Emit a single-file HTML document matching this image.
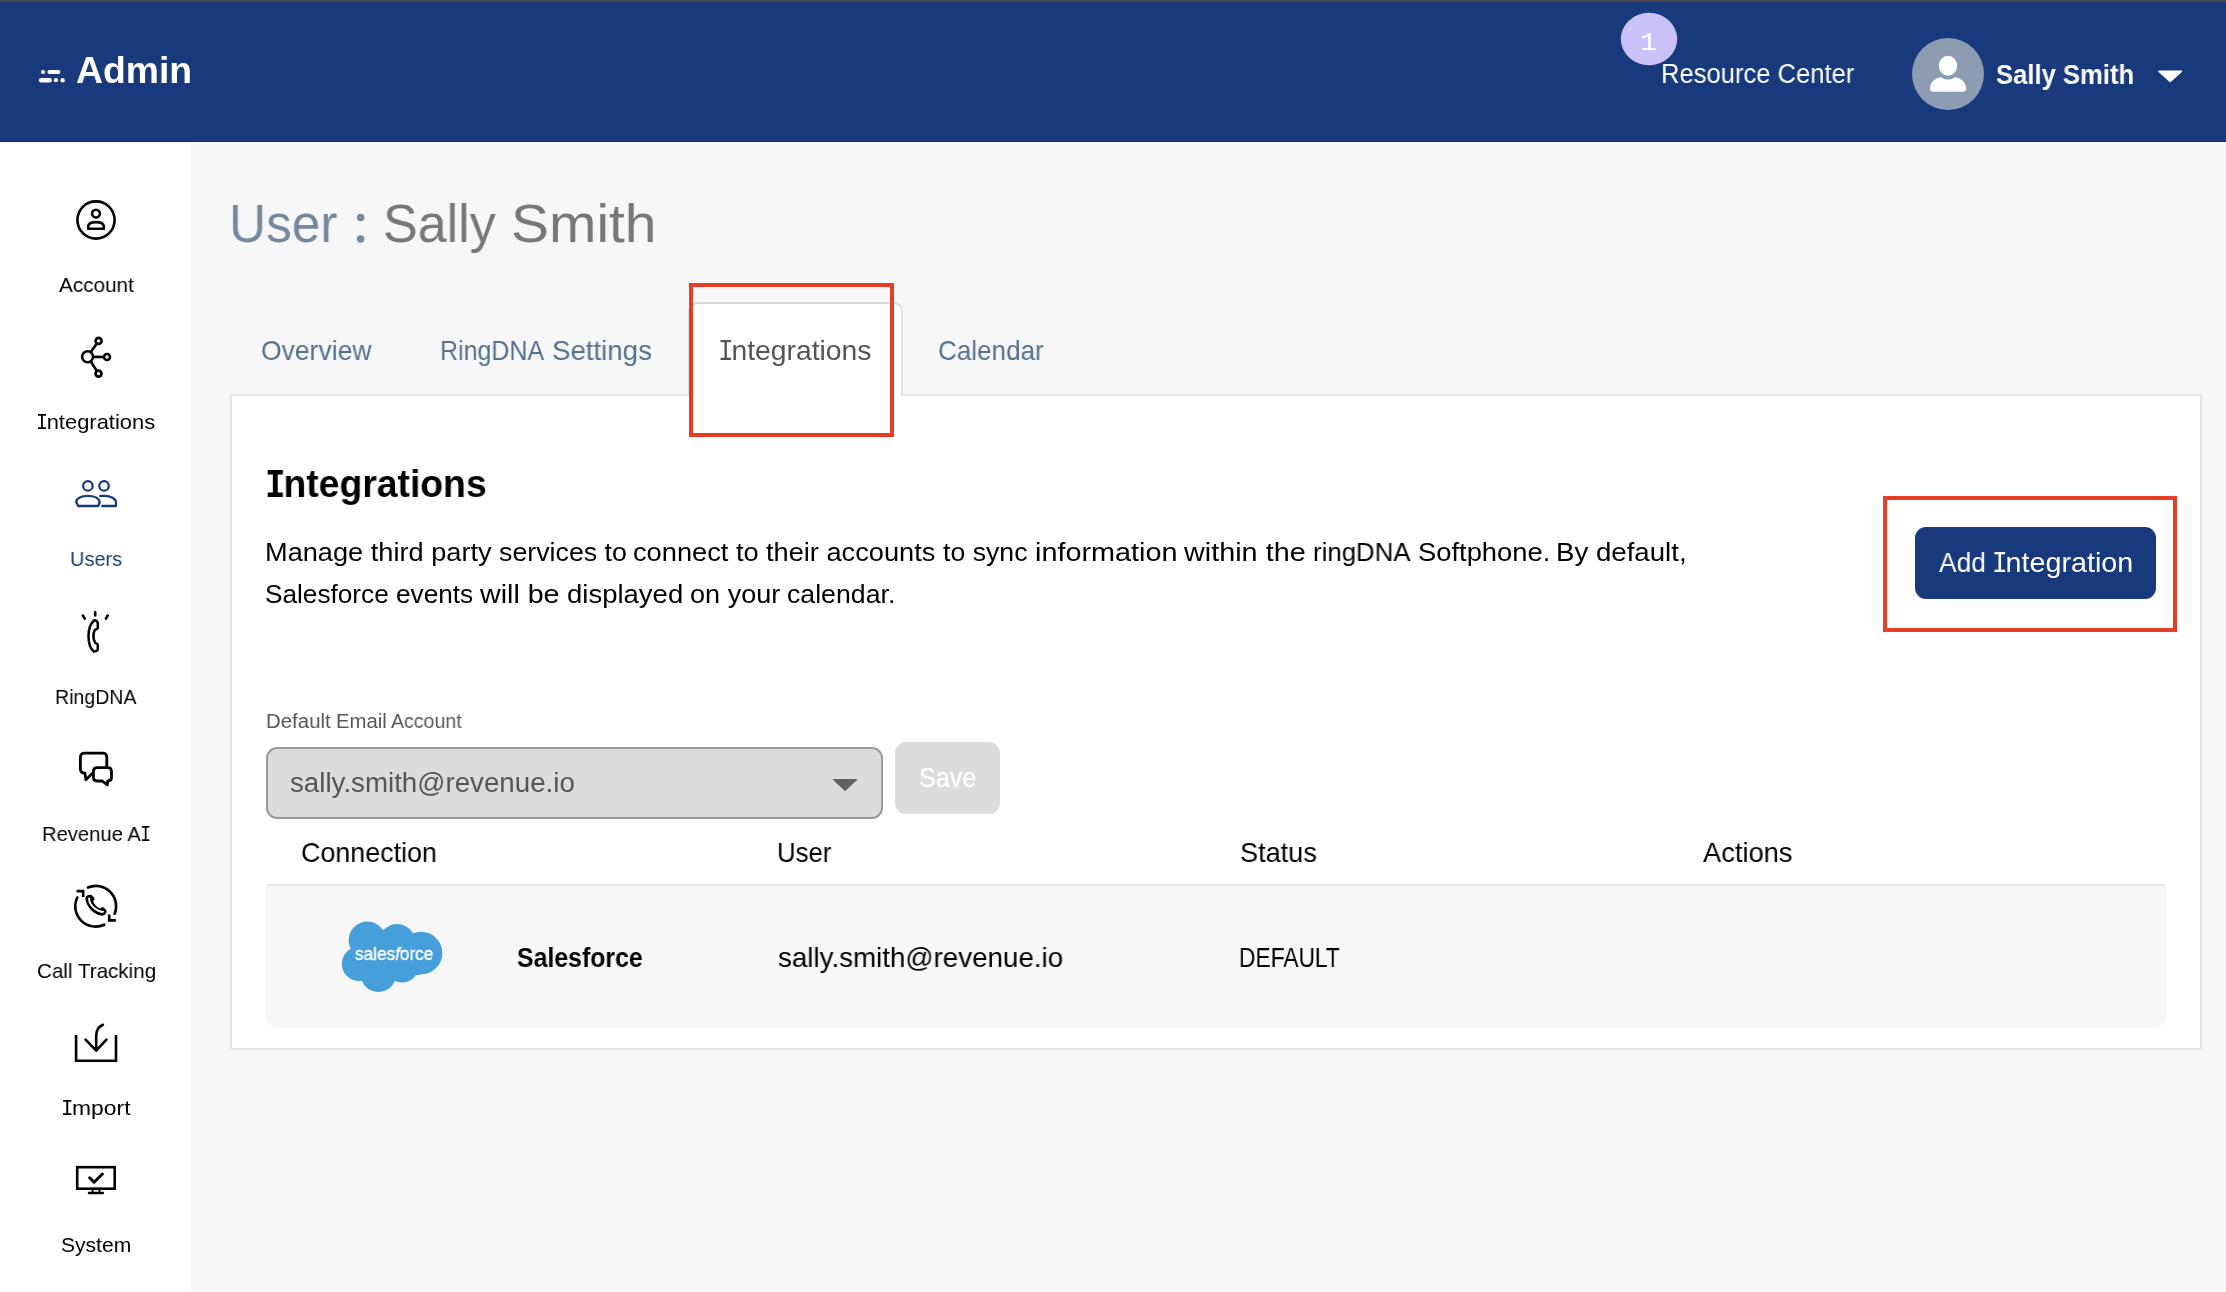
<!DOCTYPE html>
<html lang="en">
<head>
<meta charset="utf-8">
<title>Admin - User : Sally Smith</title>
<style>
*{box-sizing:border-box;margin:0;padding:0}
html,body{width:2226px;height:1292px;overflow:hidden}
body{position:relative;background:#f7f7f7;font-family:"Liberation Sans",sans-serif;color:#000}
.abs{position:absolute}
.t{position:absolute;white-space:nowrap;line-height:1;transform-origin:0 0;will-change:transform}
.I{font-family:'Liberation Mono',monospace;font-size:1.045em;display:inline-block;transform:scaleX(.87);transform-origin:0 50%;letter-spacing:-0.08em;margin-left:-0.05em;margin-right:-0.05em}
#strip{left:0;top:0;width:2226px;height:2px;background:#454545}
#hdr{left:0;top:2px;width:2226px;height:140px;background:#18397b;border-bottom:1px solid #0c2b6d}
#hdrgap{left:0;top:142px;width:2226px;height:1px;background:#fff}
#side{left:0;top:142px;width:190px;height:1150px;background:#fff}
#acttab{left:688px;top:302px;width:215px;height:96px;background:#fff;border:2px solid #e2e2e5;border-top-color:#d9d9d9;border-bottom:none;border-radius:9px 9px 0 0}
#panel{left:230px;top:394px;width:1972px;height:656px;background:#fff;border:2px solid #e6e7ec}
#tabcover{left:690px;top:394px;width:211px;height:3px;background:#fff}
.red{position:absolute;border:4px solid #e73d25}
#btn{left:1915px;top:527px;width:241px;height:72px;background:#18397b;border-radius:11px}
#sel{left:266px;top:747px;width:617px;height:72px;background:#dcdcdc;border:2px solid #9b9b9b;border-radius:11px}
#save{left:895px;top:742px;width:105px;height:72px;background:#dcdcdc;border-radius:11px}
#thline{left:266px;top:884px;width:1900px;height:2px;background:#e6e6e6}
#row{left:266px;top:886px;width:1900px;height:142px;background:#f7f7f7;border-radius:0 0 12px 12px}
#ovl{position:absolute;left:0;top:0;width:2226px;height:1292px;pointer-events:none}
</style>
</head>
<body>
<div id="strip" class="abs"></div>
<div id="hdr" class="abs"></div>
<div id="hdrgap" class="abs"></div>
<div id="side" class="abs"></div>
<div id="acttab" class="abs"></div>
<div id="panel" class="abs"></div>
<div id="tabcover" class="abs"></div>
<div class="red" style="left:689px;top:283px;width:205px;height:154px"></div>
<div id="btn" class="abs"></div>
<div class="red" style="left:1883px;top:496px;width:294px;height:136px"></div>
<div id="sel" class="abs"></div>
<div id="save" class="abs"></div>
<div id="thline" class="abs"></div>
<div id="row" class="abs"></div>

<svg id="ovl" viewBox="0 0 2226 1292" width="2226" height="1292">
<!-- title colon -->
<circle cx="360.65" cy="217.5" r="3.75" fill="#77889f"/><circle cx="360.65" cy="238.9" r="3.75" fill="#77889f"/>
<!-- header logo -->
<g fill="#fff">
<circle cx="43" cy="72" r="2.1"/>
<rect x="47.4" y="69.9" width="13" height="4.2" rx="2.1"/>
<rect x="38.9" y="78" width="13" height="4.4" rx="2.2"/>
<circle cx="55.9" cy="80.2" r="2.1"/>
<circle cx="62.6" cy="80.2" r="2.2"/>
</g>
<!-- badge -->
<ellipse cx="1649" cy="39" rx="28.2" ry="26.2" fill="#cbc2fa"/>
<!-- avatar -->
<circle cx="1948" cy="74" r="36" fill="#8b9cb3"/>
<g fill="#fff">
<ellipse cx="1948" cy="65.8" rx="9.2" ry="10"/>
<path d="M1930 88.5 C1930 81.5 1936 77.6 1941.5 77.2 C1943 78.6 1945.4 79.5 1948 79.5 C1950.6 79.5 1953 78.6 1954.5 77.2 C1960 77.6 1966.2 81.5 1966.2 88.5 C1966.2 90.6 1965 91.8 1963 91.8 L1933.2 91.8 C1931.2 91.8 1930 90.6 1930 88.5 Z"/>
</g>
<!-- header caret -->
<path d="M2159.2 70.6 L2181.2 70.6 Q2183 70.6 2181.8 72 L2171.4 81.6 Q2170.2 82.6 2169 81.6 L2158.6 72 Q2157.4 70.6 2159.2 70.6 Z" fill="#fff"/>
<!-- select caret -->
<path d="M833.4 778.9 L856.8 778.9 Q858 778.9 857 780 L845.8 790.4 Q845.1 791 844.4 790.4 L833.2 780 Q832.2 778.9 833.4 778.9 Z" fill="#616161"/>

<!-- sidebar icons -->
<g fill="none" stroke="#000" stroke-width="2.6" stroke-linecap="round" stroke-linejoin="round">
<!-- account -->
<circle cx="96" cy="220" r="18.6"/>
<circle cx="96" cy="213.6" r="3.9"/>
<path d="M88.2 228.8 L88.2 226.6 C88.2 223.4 91.6 222.1 96 222.1 C100.4 222.1 103.8 223.4 103.8 226.6 L103.8 228.8 Z" stroke-linejoin="miter"/>
<!-- integrations -->
<circle cx="87.6" cy="356.7" r="5.5"/>
<circle cx="98.6" cy="340.9" r="3"/>
<circle cx="107" cy="357" r="3"/>
<circle cx="98.5" cy="373.6" r="3"/>
<path d="M90.8 352.1 L96.9 343.4 M93.2 356.9 L103.9 357 M90.6 361.3 L96.9 371"/>
</g>
<!-- users (active) -->
<g fill="none" stroke="#18397b" stroke-width="2.3" stroke-linejoin="round">
<circle cx="87.9" cy="485.9" r="4.75"/>
<circle cx="104.05" cy="485.9" r="4.75"/>
<path d="M78.2 506 L76.1 501.8 C77.2 498 82 495.9 88 495.9 C94 495.9 99 498.2 99.7 502 L98.2 506 Z"/>
<path d="M99.3 495.9 L104.4 495.9 C110.8 495.9 116 498.6 116 502.6 L116 506 L101.3 506"/>
</g>
<g fill="none" stroke="#000" stroke-width="2.5" stroke-linecap="round" stroke-linejoin="round">
<!-- ringdna -->
<path d="M95.2 612.2 L95.2 615.4 M82.8 615.5 L84.8 618.6 M107.7 615.5 L105.9 618.6" stroke-width="2.6"/>
<path d="M94.3 620.2 C90.6 623.2 88.5 630 88.5 636.2 C88.5 643 90.6 648.6 93.8 651.5 C95.6 651.6 97.8 650.6 97.8 649.2 L97.8 645.2 C97.8 643.6 95.9 643.6 95.2 642.7 C94 641 93.4 638.6 93.4 636.2 C93.4 633.9 94 631.5 94.8 630.1 C95.5 629 97.8 629.3 97.8 627.8 L97.8 623.6 C97.8 621.5 96.1 620.2 94.3 620.2 Z"/>
</g>
<g fill="none" stroke="#000" stroke-width="2.8" stroke-linecap="round" stroke-linejoin="round">
<!-- revenue ai -->
<path d="M106.8 766 L106.8 757.4 C106.8 754.8 105.2 753.2 102.6 753.2 L84.6 753.2 C82 753.2 80.4 754.8 80.4 757.4 L80.4 769 C80.4 771.6 82 773.2 84.9 773.2 L85.9 779.8 L92.2 773.4"/>
<path d="M97.2 767.6 L107.7 767.6 C110.3 767.6 111.5 768.9 111.5 771.4 L111.5 777.2 C111.5 779.7 110.3 781 107.7 781 L107.3 784.9 L102.2 781 L97.2 781 C94.6 781 93.4 779.7 93.4 777.2 L93.4 771.4 C93.4 768.9 94.6 767.6 97.2 767.6 Z"/>
</g>
<g fill="none" stroke="#000" stroke-width="2.6" stroke-linecap="round" stroke-linejoin="round">
<!-- call tracking -->
<path d="M87.9 887.5 A20.3 20.3 0 0 1 114.7 913.7"/>
<path d="M77.3 897.5 A20.3 20.3 0 0 0 104.2 924.7"/>
<path d="M76.6 891.1 L83.2 891.1 L83.2 897" stroke-linecap="butt" stroke-linejoin="miter"/>
<path d="M109.2 914.5 L109.2 920.4 L115.8 920.4" stroke-linecap="butt" stroke-linejoin="miter"/>
<path d="M85.97 896.86 C86.31 896.30 86.72 895.71 87.46 895.37 C88.20 895.03 89.63 894.75 90.43 894.82 C91.24 894.88 91.67 895.22 92.29 895.74 C92.91 896.27 93.77 897.35 94.15 897.97 C94.52 898.59 94.64 898.96 94.52 899.46 C94.39 899.95 93.53 900.39 93.40 900.95 C93.28 901.50 93.34 902.00 93.77 902.80 C94.21 903.61 95.14 904.91 96.00 905.77 C96.87 906.64 98.17 907.63 98.97 908.00 C99.78 908.37 100.21 908.16 100.83 908.00 C101.45 907.85 101.95 906.89 102.69 907.07 C103.43 907.26 104.64 908.41 105.29 909.12 C105.94 909.83 106.53 910.54 106.59 911.35 C106.65 912.15 106.31 913.23 105.66 913.95 C105.01 914.66 103.80 915.43 102.69 915.62 C101.58 915.80 100.46 915.59 98.97 915.06 C97.49 914.53 95.38 913.64 93.77 912.46 C92.16 911.28 90.55 909.61 89.32 908.00 C88.08 906.39 86.99 904.35 86.34 902.80 C85.69 901.25 85.48 899.71 85.42 898.72 C85.35 897.73 85.63 897.42 85.97 896.86 Z" fill="#000" stroke="none"/>
<path d="M89.13 898.53 C89.22 899.12 89.10 900.73 89.69 902.06 C90.28 903.39 91.48 905.22 92.66 906.52 C93.84 907.82 95.45 909.02 96.75 909.86 C98.05 910.70 99.41 911.22 100.46 911.53 C101.51 911.84 102.63 911.69 103.06 911.72" stroke="#fff" stroke-width="1.9"/>
</g>
<g fill="none" stroke="#000" stroke-width="2.6" stroke-linejoin="miter">
<!-- import -->
<path d="M76.1 1034.9 L76.1 1060.7 L116 1060.7 L116 1034.9"/>
<path d="M102.9 1024.8 C98.2 1027 96.2 1030.6 96.2 1035.5 L96.2 1050.2 M85.6 1039.6 L96.2 1050.6 L106.4 1039.6" stroke-linecap="round" stroke-linejoin="round"/>
<!-- system -->
<rect x="77.2" y="1167.2" width="37.5" height="21.5"/>
<path d="M92.6 1189.5 L92.6 1192.2 M99.4 1189.5 L99.4 1192.2" stroke-width="2"/>
<path d="M88.9 1193 L103 1193" stroke-linecap="round" stroke-width="2.3"/>
<path d="M89.7 1177.9 L94.1 1182.2 L102.4 1174" stroke-width="3" stroke-linecap="round" stroke-linejoin="round"/>
</g>
<!-- salesforce cloud -->
<g fill="#469edb">
<circle cx="367.3" cy="940.2" r="18.6"/>
<circle cx="397" cy="942.2" r="18.2"/>
<circle cx="421" cy="953" r="21.3"/>
<circle cx="359" cy="963.8" r="17.2"/>
<circle cx="378.4" cy="973.9" r="18"/>
<circle cx="402.4" cy="966.9" r="15.6"/>
<rect x="360" y="940" width="60" height="35"/>
</g>
</svg>

<div class="t" id="t_admin" style="left:75.58px;top:51.70px;font-size:37px;transform:scaleX(1.0092);font-weight:bold;color:#fff">Admin</div>
<div class="t" id="t_rc" style="left:1660.79px;top:60.90px;font-size:27px;transform:scaleX(0.9475);color:#fff">Resource Center</div>
<div class="t" id="t_ss" style="left:1995.81px;top:61.80px;font-size:27px;transform:scaleX(0.9495);font-weight:bold;color:#fff">Sally Smith</div>
<div class="t" id="t_ti1" style="left:228.89px;top:196.00px;font-size:54px;transform:scaleX(0.9510);color:#75879f">User<span style="color:transparent"> :</span></div>
<div class="t" id="t_ti3" style="left:382.72px;top:196.00px;font-size:54px;transform:scaleX(0.9631);color:#787878">Sally</div>
<div class="t" id="t_ti4" style="left:510.84px;top:196.00px;font-size:54px;transform:scaleX(1.0541);color:#787878">Smith</div>
<div class="t" id="t_tab1" style="left:260.97px;top:336.80px;font-size:28px;transform:scaleX(0.9465);color:#56708f">Overview</div>
<div class="t" id="t_tab2a" style="left:440.10px;top:336.80px;font-size:28px;transform:scaleX(0.8926);color:#56708f">RingDNA</div>
<div class="t" id="t_tab2b" style="left:552.12px;top:336.80px;font-size:28px;transform:scaleX(0.9875);color:#56708f">Settings</div>
<div class="t" id="t_tab3" style="left:719.19px;top:337.00px;font-size:28px;transform:scaleX(1.0104);color:#555"><span class="I">I</span>ntegrations</div>
<div class="t" id="t_tab4" style="left:938.18px;top:336.80px;font-size:28px;transform:scaleX(0.9304);color:#56708f">Calendar</div>
<div class="t" id="t_h" style="left:266.58px;top:465.40px;font-size:38.5px;transform:scaleX(0.9697);font-weight:bold;color:#000"><span class="I">I</span>ntegrations</div>
<div class="t" id="t_p1_0" style="left:265.35px;top:538.70px;font-size:26px;transform:scaleX(1.0454);color:#000">Manage third party</div>
<div class="t" id="t_p1_1" style="left:498.96px;top:538.70px;font-size:26px;transform:scaleX(1.0296);color:#000">services to</div>
<div class="t" id="t_p1_2" style="left:633.47px;top:538.70px;font-size:26px;transform:scaleX(1.0479);color:#000">connect to</div>
<div class="t" id="t_p1_3" style="left:766.42px;top:538.70px;font-size:26px;transform:scaleX(1.0459);color:#000">their accounts</div>
<div class="t" id="t_p1_4" style="left:942.66px;top:538.70px;font-size:26px;transform:scaleX(1.0258);color:#000">to sync</div>
<div class="t" id="t_p1_5" style="left:1034.52px;top:538.70px;font-size:26px;transform:scaleX(1.1086);color:#000">information</div>
<div class="t" id="t_p1_6" style="left:1183.97px;top:538.70px;font-size:26px;transform:scaleX(1.1079);color:#000">within the</div>
<div class="t" id="t_p1_7" style="left:1312.52px;top:538.70px;font-size:26px;transform:scaleX(0.9919);color:#000">ringDNA</div>
<div class="t" id="t_p1_8" style="left:1418.30px;top:538.70px;font-size:26px;transform:scaleX(1.0521);color:#000">Softphone.</div>
<div class="t" id="t_p1_9" style="left:1556.03px;top:538.70px;font-size:26px;transform:scaleX(1.0630);color:#000">By default,</div>
<div class="t" id="t_p2_0" style="left:265.09px;top:580.60px;font-size:26px;transform:scaleX(1.0074);color:#000">Salesforce events</div>
<div class="t" id="t_p2_1" style="left:480.38px;top:580.60px;font-size:26px;transform:scaleX(1.1008);color:#000">will be</div>
<div class="t" id="t_p2_2" style="left:567.11px;top:580.60px;font-size:26px;transform:scaleX(1.0577);color:#000">displayed</div>
<div class="t" id="t_p2_3" style="left:689.79px;top:580.60px;font-size:26px;transform:scaleX(1.0411);color:#000">on your</div>
<div class="t" id="t_p2_4" style="left:787.45px;top:580.60px;font-size:26px;transform:scaleX(1.0263);color:#000">calendar.</div>
<div class="t" id="t_btna" style="left:1939.44px;top:549.40px;font-size:28px;transform:scaleX(0.9413);color:#fff">Add</div>
<div class="t" id="t_btnb" style="left:1992.81px;top:549.40px;font-size:28px;transform:scaleX(1.0244);color:#fff"><span class="I">I</span>ntegration</div>
<div class="t" id="t_lbla" style="left:265.92px;top:710.50px;font-size:20px;transform:scaleX(1.0209);color:#585858">Default</div>
<div class="t" id="t_lblb" style="left:336.37px;top:710.50px;font-size:20px;transform:scaleX(1.0163);color:#585858">Email</div>
<div class="t" id="t_lblc" style="left:391.21px;top:710.50px;font-size:20px;transform:scaleX(0.9781);color:#585858">Account</div>
<div class="t" id="t_sel" style="left:289.64px;top:769.70px;font-size:27px;transform:scaleX(1.0263);color:#555">sally.smith@revenue.io</div>
<div class="t" id="t_save" style="left:918.98px;top:765.10px;font-size:27px;transform:scaleX(0.9328);color:#fff;-webkit-text-stroke:0.25px #fff">Save</div>
<div class="t" id="t_c1" style="left:301.31px;top:838.50px;font-size:28px;transform:scaleX(0.9597);color:#000">Connection</div>
<div class="t" id="t_c2" style="left:776.75px;top:838.50px;font-size:28px;transform:scaleX(0.9197);color:#000">User</div>
<div class="t" id="t_c3" style="left:1240.25px;top:838.50px;font-size:28px;transform:scaleX(0.9679);color:#000">Status</div>
<div class="t" id="t_c4" style="left:1703.08px;top:838.50px;font-size:28px;transform:scaleX(0.9746);color:#000">Actions</div>
<div class="t" id="t_sf" style="left:517.25px;top:944.30px;font-size:28px;transform:scaleX(0.8876);font-weight:bold;color:#000">Salesforce</div>
<div class="t" id="t_em" style="left:777.64px;top:944.30px;font-size:28px;transform:scaleX(0.9907);color:#000">sally.smith@revenue.io</div>
<div class="t" id="t_df" style="left:1239.42px;top:944.30px;font-size:28px;transform:scaleX(0.8131);color:#000">DEFAULT</div>
<div class="t" id="t_n1" style="left:59.21px;top:273.90px;font-size:21px;transform:scaleX(0.9868);color:#000">Account</div>
<div class="t" id="t_n2" style="left:36.78px;top:410.80px;font-size:21px;transform:scaleX(1.0443);color:#000"><span class="I">I</span>ntegrations</div>
<div class="t" id="t_n3" style="left:69.97px;top:547.80px;font-size:21px;transform:scaleX(0.9517);color:#18397b">Users</div>
<div class="t" id="t_n4" style="left:55.28px;top:685.80px;font-size:21px;transform:scaleX(0.9314);color:#000">RingDNA</div>
<div class="t" id="t_n5" style="left:42.07px;top:822.60px;font-size:21px;transform:scaleX(0.9619);color:#000">Revenue A<span class="I">I</span></div>
<div class="t" id="t_n6" style="left:36.59px;top:959.70px;font-size:21px;transform:scaleX(0.9818);color:#000">Call Tracking</div>
<div class="t" id="t_n7" style="left:62.33px;top:1096.80px;font-size:21px;transform:scaleX(1.0887);color:#000"><span class="I">I</span>mport</div>
<div class="t" id="t_n8" style="left:61.28px;top:1233.80px;font-size:21px;transform:scaleX(1.0028);color:#000">System</div>
<div class="t" id="t_sfl" style="left:355.06px;top:944.60px;font-size:18.5px;transform:scaleX(0.9281);color:#fff;-webkit-text-stroke:0.35px #fff">sales<i style="font-style:italic">f</i>orce</div>
<div class="t" id="t_one" style="left:1640.16px;top:31.10px;font-size:25px;transform:scaleX(1.1286);color:#fff;font-family:'Liberation Mono',monospace">1</div>
</body>
</html>
